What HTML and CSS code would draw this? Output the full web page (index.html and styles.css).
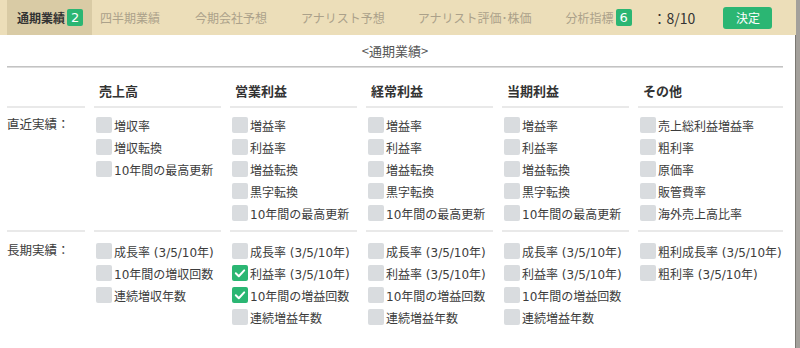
FILE: index.html
```html
<!DOCTYPE html>
<html lang="ja">
<head>
<meta charset="utf-8">
<link rel="stylesheet" href="styles.css">
</head>
<body>
<div class="frame">
  <div class="tabs">
    <div class="tab active">通期業績<span class="badge">2</span></div>
    <div class="tab t2">四半期業績</div>
    <div class="tab t3">今期会社予想</div>
    <div class="tab t4">アナリスト予想</div>
    <div class="tab t5">アナリスト評価･株価</div>
    <div class="tab t6">分析指標<span class="badge">6</span></div>
    <div class="count">：8/10</div>
    <button class="ok">決定</button>
  </div>
  <div class="main">
    <div class="title">&lt;通期業績&gt;</div>
    <div class="rule"></div>
    <div class="grid">
      <div class="head"></div>
      <div class="head">売上高</div>
      <div class="head">営業利益</div>
      <div class="head">経常利益</div>
      <div class="head">当期利益</div>
      <div class="head">その他</div>

      <div class="cell label">直近実績：</div>
      <div class="cell">
        <div class="item"><span class="cb"></span>増収率</div>
        <div class="item"><span class="cb"></span>増収転換</div>
        <div class="item"><span class="cb"></span>10年間の最高更新</div>
      </div>
      <div class="cell">
        <div class="item"><span class="cb"></span>増益率</div>
        <div class="item"><span class="cb"></span>利益率</div>
        <div class="item"><span class="cb"></span>増益転換</div>
        <div class="item"><span class="cb"></span>黒字転換</div>
        <div class="item"><span class="cb"></span>10年間の最高更新</div>
      </div>
      <div class="cell">
        <div class="item"><span class="cb"></span>増益率</div>
        <div class="item"><span class="cb"></span>利益率</div>
        <div class="item"><span class="cb"></span>増益転換</div>
        <div class="item"><span class="cb"></span>黒字転換</div>
        <div class="item"><span class="cb"></span>10年間の最高更新</div>
      </div>
      <div class="cell">
        <div class="item"><span class="cb"></span>増益率</div>
        <div class="item"><span class="cb"></span>利益率</div>
        <div class="item"><span class="cb"></span>増益転換</div>
        <div class="item"><span class="cb"></span>黒字転換</div>
        <div class="item"><span class="cb"></span>10年間の最高更新</div>
      </div>
      <div class="cell">
        <div class="item"><span class="cb"></span>売上総利益増益率</div>
        <div class="item"><span class="cb"></span>粗利率</div>
        <div class="item"><span class="cb"></span>原価率</div>
        <div class="item"><span class="cb"></span>販管費率</div>
        <div class="item"><span class="cb"></span>海外売上高比率</div>
      </div>

      <div class="cell label last">長期実績：</div>
      <div class="cell last">
        <div class="item"><span class="cb"></span>成長率 (3/5/10年)</div>
        <div class="item"><span class="cb"></span>10年間の増収回数</div>
        <div class="item"><span class="cb"></span>連続増収年数</div>
      </div>
      <div class="cell last">
        <div class="item"><span class="cb"></span>成長率 (3/5/10年)</div>
        <div class="item"><span class="cb on"><svg viewBox="0 0 16 16" width="16" height="16"><polyline points="3.8,8.3 6.8,11.2 12.2,5.4" fill="none" stroke="#fff" stroke-width="2" stroke-linecap="round" stroke-linejoin="round"/></svg></span>利益率 (3/5/10年)</div>
        <div class="item"><span class="cb on"><svg viewBox="0 0 16 16" width="16" height="16"><polyline points="3.8,8.3 6.8,11.2 12.2,5.4" fill="none" stroke="#fff" stroke-width="2" stroke-linecap="round" stroke-linejoin="round"/></svg></span>10年間の増益回数</div>
        <div class="item"><span class="cb"></span>連続増益年数</div>
      </div>
      <div class="cell last">
        <div class="item"><span class="cb"></span>成長率 (3/5/10年)</div>
        <div class="item"><span class="cb"></span>利益率 (3/5/10年)</div>
        <div class="item"><span class="cb"></span>10年間の増益回数</div>
        <div class="item"><span class="cb"></span>連続増益年数</div>
      </div>
      <div class="cell last">
        <div class="item"><span class="cb"></span>成長率 (3/5/10年)</div>
        <div class="item"><span class="cb"></span>利益率 (3/5/10年)</div>
        <div class="item"><span class="cb"></span>10年間の増益回数</div>
        <div class="item"><span class="cb"></span>連続増益年数</div>
      </div>
      <div class="cell last">
        <div class="item"><span class="cb"></span>粗利成長率 (3/5/10年)</div>
        <div class="item"><span class="cb"></span>粗利率 (3/5/10年)</div>
      </div>
    </div>
  </div>
</div>
</body>
</html>
```
FILE: styles.css
```css
* { box-sizing: border-box; }
html, body { margin: 0; padding: 0; background: #fff; }
body {
  width: 800px;
  height: 348px;
  overflow: hidden;
  font-family: "DejaVu Sans", "Noto Sans CJK JP", sans-serif;
  font-size: 12px;
  color: #3c3c3c;
}
.frame {
  width: 800px;
  height: 348px;
  border-right: 4px solid #a3a09b;
  box-shadow: inset -1px 0 0 #7b7872;
}
.tabs {
  height: 35px;
  background: #ecdeb9;
  display: flex;
  align-items: center;
  padding-left: 7px;
}
.tab {
  height: 35px;
  display: flex;
  align-items: center;
  padding: 0 10px;
  color: #aba18a;
  white-space: nowrap;
  font-family: "Noto Sans CJK JP", sans-serif;
}
.tab.active {
  background: #d9cba5;
  color: #333;
  font-weight: bold;
  padding: 0 9px 0 10px;
}
.t2 { margin-left: -2px; }
.t3 { margin-left: 15px; }
.t4 { margin-left: 14px; }
.t5 { margin-left: 13px; }
.t6 { margin-left: 14px; }
.badge {
  display: inline-flex;
  align-items: center;
  justify-content: center;
  width: 16px;
  height: 17px;
  margin-left: 2px;
  background: #2bb673;
  color: #fff;
  font-weight: normal;
  border-radius: 2px;
  font-family: "DejaVu Sans", sans-serif;
  font-size: 13px;
}
.count {
  margin-left: 11px;
  font-size: 14px;
  color: #333;
  font-family: "Noto Sans CJK JP", sans-serif;
}
.ok {
  margin-left: 28px;
  width: 49px;
  height: 22px;
  border: none;
  border-radius: 3px;
  background: #2bb673;
  color: #fff;
  font-family: "Noto Sans CJK JP", sans-serif;
  font-size: 12px;
  padding: 0;
}
.main {
  padding: 0 13px 0 7px;
}
.title {
  height: 31px;
  padding-top: 7px;
  line-height: 18px;
  text-align: center;
  color: #555;
  font-size: 13px;
  font-family: "Noto Sans CJK JP", sans-serif;
}
.rule {
  height: 2px;
  background: #c3c3c3;
  border-bottom: 1px solid #dcdcdc;
}
.grid {
  display: grid;
  grid-template-columns: 78px 127px 127px 127px 127px 1fr;
  column-gap: 9px;
}
.head {
  padding: 15px 0 0 5px;
  height: 40px;
  line-height: 18px;
  font-weight: bold;
  font-size: 13px;
  color: #333;
  border-bottom: 2px solid #e9e9e9;
}
.cell {
  padding: 6px 0 6px 0;
  border-bottom: 2px solid #e9e9e9;
}
.cell.last { border-bottom: none; padding-top: 8px; }
.label {
  line-height: 22px;
  font-size: 12.5px;
}
.item {
  height: 22px;
  display: flex;
  align-items: center;
  white-space: nowrap;
  padding-left: 2px;
}
.cb {
  width: 16px;
  height: 16px;
  flex: none;
  border-radius: 2px;
  background: #d9dcdf;
  margin-right: 2px;
  display: inline-flex;
}
.cb.on { background: #2bb673; }
```
